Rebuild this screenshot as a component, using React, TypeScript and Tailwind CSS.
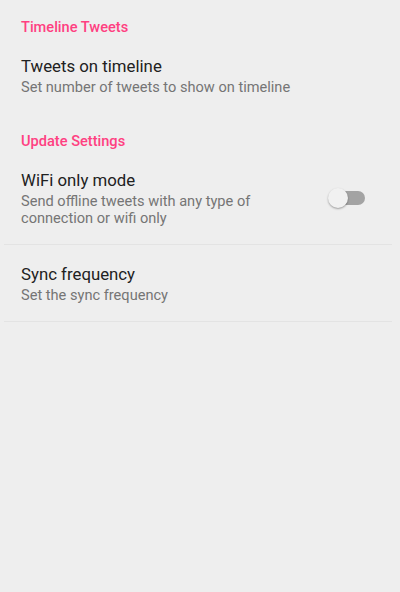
const Header = ({ title }: { title: string }) => (
	<div className="px-[21px] pt-[17px] text-[14.6px] leading-[20px] font-medium text-[#ff4081]">
		{title}
	</div>
);

const Row = ({
	title,
	summary,
	right,
}: {
	title: string;
	summary: React.ReactNode;
	right?: React.ReactNode;
}) => (
	<div className="flex items-center justify-between pl-[21px] pr-[35px] pt-[18px] pb-[17px]">
		<div className="flex flex-col">
			<div className="text-[16.8px] leading-[22px] text-[#212121]">{title}</div>
			<div className="mt-[2px] text-[14.6px] leading-[17px] text-[#757575]">{summary}</div>
		</div>
		{right}
	</div>
);

const Toggle = () => (
	<div className="relative w-[36px] h-[20px] flex items-center">
		<div className="ml-[1px] w-[35px] h-[14px] rounded-full bg-[#a3a3a3]" />
		<div className="absolute left-[-1px] top-0 w-[20px] h-[20px] rounded-full bg-[#f1f1f1] shadow-[0_1px_2px_rgba(0,0,0,0.35)]" />
	</div>
);

const App = () => {
	return (
		<div
			className="w-[400px] h-[592px] bg-[#eeeeee] overflow-hidden"
			style={{ fontFamily: "Roboto, 'Noto Sans', sans-serif" }}
		>
			<Header title="Timeline Tweets" />
			<Row title="Tweets on timeline" summary="Set number of tweets to show on timeline" />
			<div className="pt-px">
				<Header title="Update Settings" />
			</div>
			<Row
				title="WiFi only mode"
				summary={
					<>
						Send offline tweets with any type of
						<br />
						connection or wifi only
					</>
				}
				right={<Toggle />}
			/>
			<div className="ml-[4px] mr-[8px] h-px bg-[#e3e3e3]" />
			<Row title="Sync frequency" summary="Set the sync frequency" />
			<div className="ml-[4px] mr-[8px] h-px bg-[#e3e3e3]" />
		</div>
	);
};

export default App;
